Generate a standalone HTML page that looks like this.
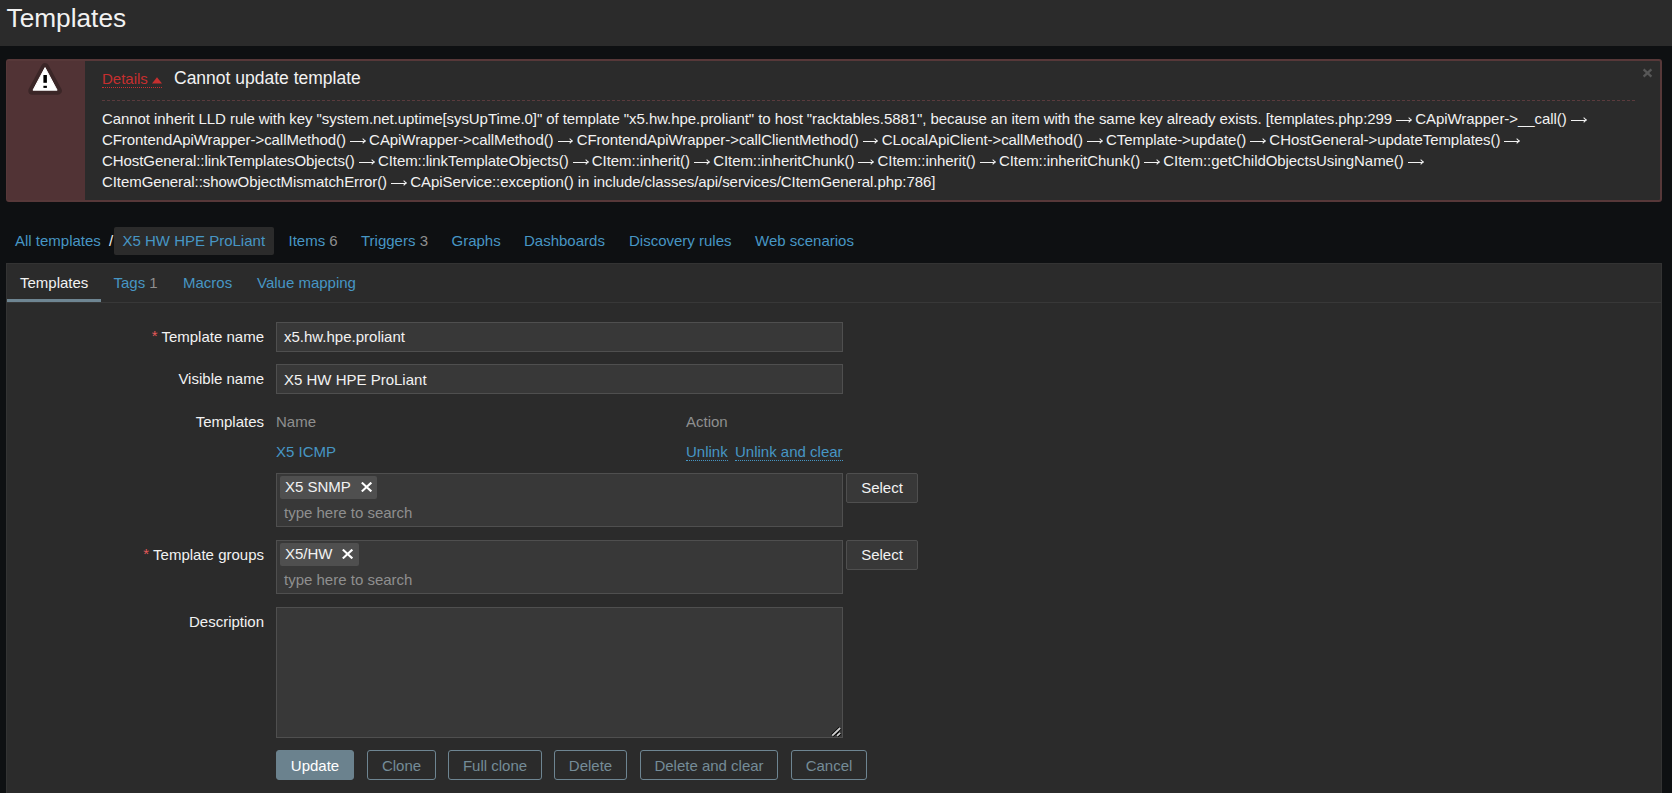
<!DOCTYPE html>
<html><head><meta charset="utf-8">
<style>
html,body{margin:0;padding:0}
body{width:1672px;height:793px;overflow:hidden;background:#0e1012;position:relative;font-family:"Liberation Sans",sans-serif;font-size:15px;color:#f2f2f2}
.a{position:absolute;white-space:pre;line-height:20px}
.lnk{color:#4796c4}
.gr{color:#8f8f8f}
.hdr{position:absolute;left:0;top:0;width:1672px;height:46px;background:#2b2b2b}
.msg{position:absolute;left:6px;top:59px;width:1652px;height:139px;background:#2b2b2b;border:2px solid #573839;border-radius:3px}
.msgbar{position:absolute;left:7px;top:61px;width:78px;height:139px;background:#513335}
.tabs{position:absolute;left:6px;top:263px;width:1654px;height:540px;background:#2b2b2b;border:1px solid #333333}
.inp{position:absolute;background:#383838;border:1px solid #4f4f4f;box-sizing:border-box}
.chip{position:absolute;background:#4f4f4f;border-radius:2px;box-sizing:border-box}
.btn{position:absolute;box-sizing:border-box;border:1px solid #6e8592;border-radius:3px;height:30px;top:750px;color:#758c98;text-align:center;line-height:28px;padding-top:1px;white-space:pre}
.sel{position:absolute;box-sizing:border-box;border:1px solid #4f4f4f;border-radius:2px;height:30px;color:#f2f2f2;background:#383838;text-align:center;line-height:28px;white-space:pre}
.req{color:#e45959;position:relative;top:-1px}
.lbl{position:absolute;white-space:pre;line-height:20px;right:1408px;text-align:right}
.dot{border-bottom:1px dotted #4796c4}
.ar{display:inline-block;position:relative;width:15px;height:7px;vertical-align:0}
.ar::before{content:"";position:absolute;left:0;top:3px;width:14.5px;height:1px;background:#f2f2f2}
.ar::after{content:"";position:absolute;left:10.8px;top:1.4px;width:3px;height:3px;border-top:1px solid #f2f2f2;border-right:1px solid #f2f2f2;transform:rotate(45deg)}
.ml{position:absolute;left:102px;top:108px;line-height:21px;white-space:pre;letter-spacing:-0.066px}
</style></head><body>
<div class="hdr"></div>
<div class="a" style="left:6.5px;top:3px;font-size:26.25px;line-height:30px">Templates</div>

<div class="msg"></div>
<div class="msgbar"></div>
<svg style="position:absolute;left:27px;top:62px" width="36" height="34" viewBox="0 0 36 34">
  <path d="M18.05 5.1 L30.8 28.7 L5.3 28.7 Z" fill="#3b2627" stroke="#3b2627" stroke-width="8" stroke-linejoin="round"/>
  <path d="M18.05 5.6 L30.1 28.2 L6.0 28.2 Z" fill="#ffffff" stroke="#ffffff" stroke-width="1" stroke-linejoin="round"/>
  <rect x="16.4" y="13" width="3.5" height="7.8" fill="#000"/>
  <rect x="16.4" y="23.8" width="3.5" height="2.1" fill="#000"/>
</svg>
<div class="a" style="left:102px;top:69px;color:#c62f2f">Details</div>
<div style="position:absolute;left:102px;top:87px;width:60px;height:0;border-top:1px dotted #c62f2f"></div>
<svg style="position:absolute;left:152px;top:77px" width="10" height="7" viewBox="0 0 10 7"><path d="M5 0.3 L10 6.6 L0 6.6 Z" fill="#c62f2f"/></svg>
<div class="a" style="left:174px;top:67px;font-size:17.5px;line-height:22px">Cannot update template</div>
<div style="position:absolute;left:102px;top:100px;width:1533px;height:0;border-top:1px dashed #5a3b3d"></div>
<svg style="position:absolute;left:1642px;top:68px" width="11" height="10" viewBox="0 0 11 10"><path d="M1.6 1.4 L9.4 8.6 M9.4 1.4 L1.6 8.6" stroke="#575757" stroke-width="2.3"/></svg>
<div class="ml">Cannot inherit LLD rule with key "system.net.uptime[sysUpTime.0]" of template "x5.hw.hpe.proliant" to host "racktables.5881", because an item with the same key already exists. [templates.php:299 <i class="ar"></i> CApiWrapper-&gt;__call() <i class="ar"></i>
CFrontendApiWrapper-&gt;callMethod() <i class="ar"></i> CApiWrapper-&gt;callMethod() <i class="ar"></i> CFrontendApiWrapper-&gt;callClientMethod() <i class="ar"></i> CLocalApiClient-&gt;callMethod() <i class="ar"></i> CTemplate-&gt;update() <i class="ar"></i> CHostGeneral-&gt;updateTemplates() <i class="ar"></i>
CHostGeneral::linkTemplatesObjects() <i class="ar"></i> CItem::linkTemplateObjects() <i class="ar"></i> CItem::inherit() <i class="ar"></i> CItem::inheritChunk() <i class="ar"></i> CItem::inherit() <i class="ar"></i> CItem::inheritChunk() <i class="ar"></i> CItem::getChildObjectsUsingName() <i class="ar"></i>
CItemGeneral::showObjectMismatchError() <i class="ar"></i> CApiService::exception() in include/classes/api/services/CItemGeneral.php:786]</div>

<!-- breadcrumbs -->
<div class="a lnk" style="left:15px;top:231px">All templates</div>
<div class="a" style="left:109px;top:231px">/</div>
<div style="position:absolute;left:114px;top:227px;width:160px;height:28px;background:#2b2b2b;border-radius:2px"></div>
<div class="a lnk" style="left:122.5px;top:231px">X5 HW HPE ProLiant</div>
<div class="a lnk" style="left:288.5px;top:231px">Items <span class="gr">6</span></div>
<div class="a lnk" style="left:361px;top:231px">Triggers <span class="gr">3</span></div>
<div class="a lnk" style="left:451.5px;top:231px">Graphs</div>
<div class="a lnk" style="left:524px;top:231px">Dashboards</div>
<div class="a lnk" style="left:629px;top:231px">Discovery rules</div>
<div class="a lnk" style="left:755px;top:231px">Web scenarios</div>

<!-- tabs container -->
<div class="tabs"></div>
<div style="position:absolute;left:7px;top:302px;width:1654px;height:1px;background:#383838"></div>
<div style="position:absolute;left:7px;top:299px;width:94px;height:3px;background:#6e8592"></div>
<div class="a" style="left:20px;top:273px">Templates</div>
<div class="a lnk" style="left:113.5px;top:273px">Tags <span class="gr">1</span></div>
<div class="a lnk" style="left:183px;top:273px">Macros</div>
<div class="a lnk" style="left:257px;top:273px">Value mapping</div>

<!-- form -->
<div class="lbl" style="top:327px"><span class="req">* </span>Template name</div>
<div class="inp" style="left:276px;top:322px;width:567px;height:30px"></div>
<div class="a" style="left:284px;top:327px">x5.hw.hpe.proliant</div>

<div class="lbl" style="top:369px">Visible name</div>
<div class="inp" style="left:276px;top:364px;width:567px;height:30px"></div>
<div class="a" style="left:284px;top:370px">X5 HW HPE ProLiant</div>

<div class="lbl" style="top:412px">Templates</div>
<div class="a gr" style="left:276px;top:412px">Name</div>
<div class="a gr" style="left:686px;top:412px">Action</div>
<div class="a lnk" style="left:276px;top:442px">X5 ICMP</div>
<div class="a lnk" style="left:686px;top:442px"><span class="dot">Unlink</span></div>
<div class="a lnk" style="left:735px;top:442px"><span class="dot">Unlink and clear</span></div>

<div class="inp" style="left:276px;top:473px;width:567px;height:54px"></div>
<div class="chip" style="left:280px;top:476px;width:97px;height:23px"></div>
<div class="a" style="left:285px;top:477px">X5 SNMP</div>
<svg style="position:absolute;left:361px;top:482px" width="11" height="10" viewBox="0 0 11 10"><path d="M0.8 0.6 L10.3 9.4 M10.3 0.6 L0.8 9.4" stroke="#ffffff" stroke-width="2.1"/></svg>
<div class="a gr" style="left:284px;top:503px">type here to search</div>
<div class="sel" style="left:846px;top:473px;width:72px">Select</div>

<div class="lbl" style="top:545px"><span class="req">* </span>Template groups</div>
<div class="inp" style="left:276px;top:540px;width:567px;height:54px"></div>
<div class="chip" style="left:280px;top:543px;width:79px;height:23px"></div>
<div class="a" style="left:285px;top:544px">X5/HW</div>
<svg style="position:absolute;left:342px;top:549px" width="11" height="10" viewBox="0 0 11 10"><path d="M0.8 0.6 L10.3 9.4 M10.3 0.6 L0.8 9.4" stroke="#ffffff" stroke-width="2.1"/></svg>
<div class="a gr" style="left:284px;top:570px">type here to search</div>
<div class="sel" style="left:846px;top:540px;width:72px">Select</div>

<div class="lbl" style="top:612px">Description</div>
<div class="inp" style="left:276px;top:607px;width:567px;height:131px"></div>
<svg style="position:absolute;left:830px;top:725px" width="12" height="12" viewBox="0 0 12 12"><path d="M2.2 10.6 L10.2 3 M7.0 10.9 L10.2 7.9" stroke="#000" stroke-width="3.4"/><path d="M2.2 10.6 L10.2 3 M7.0 10.9 L10.2 7.9" stroke="#cfcfcf" stroke-width="1.9"/></svg>

<div class="btn" style="left:276px;width:78px;background:#6b828e;border-color:#6b828e;color:#ffffff">Update</div>
<div class="btn" style="left:367px;width:69px">Clone</div>
<div class="btn" style="left:448px;width:94px">Full clone</div>
<div class="btn" style="left:554px;width:73px">Delete</div>
<div class="btn" style="left:640px;width:138px">Delete and clear</div>
<div class="btn" style="left:791px;width:76px">Cancel</div>
</body></html>
